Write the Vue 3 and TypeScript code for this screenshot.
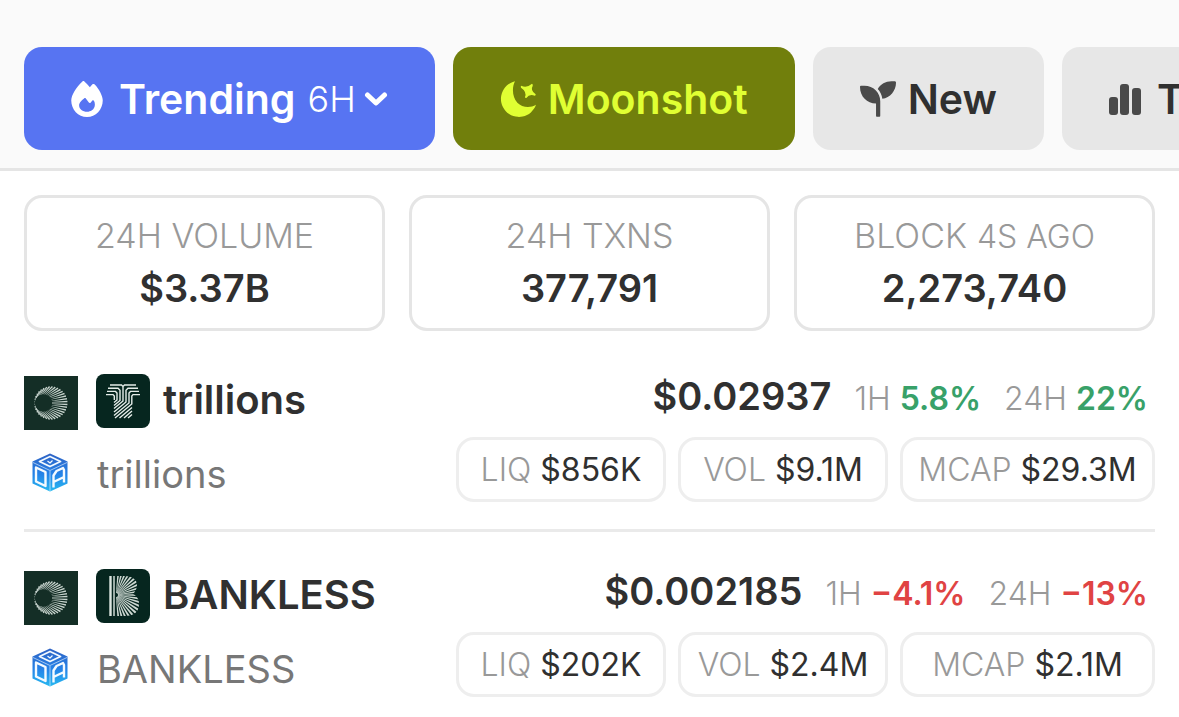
<script setup lang="ts">
interface Stat {
  label: string
  detail?: string
  value: string
}

interface Change {
  period: string
  value: string
  up: boolean
}

interface Token {
  name: string
  symbol: string
  logo: 'pillar' | 'fan'
  price: string
  changes: Change[]
  metrics: { label: string; value: string }[]
}

const stats: Stat[] = [
  { label: '24H VOLUME', value: '$3.37B' },
  { label: '24H TXNS', value: '377,791' },
  { label: 'BLOCK', detail: '4S AGO', value: '2,273,740' },
]

const tokens: Token[] = [
  {
    name: 'trillions',
    symbol: 'trillions',
    logo: 'pillar',
    price: '$0.02937',
    changes: [
      { period: '1H', value: '5.8%', up: true },
      { period: '24H', value: '22%', up: true },
    ],
    metrics: [
      { label: 'LIQ', value: '$856K' },
      { label: 'VOL', value: '$9.1M' },
      { label: 'MCAP', value: '$29.3M' },
    ],
  },
  {
    name: 'BANKLESS',
    symbol: 'BANKLESS',
    logo: 'fan',
    price: '$0.002185',
    changes: [
      { period: '1H', value: '−4.1%', up: false },
      { period: '24H', value: '−13%', up: false },
    ],
    metrics: [
      { label: 'LIQ', value: '$202K' },
      { label: 'VOL', value: '$2.4M' },
      { label: 'MCAP', value: '$2.1M' },
    ],
  },
]

// A spoke that widens from its inner point (x1, y1) to its outer point (x2, y2).
function wedge(x1: number, y1: number, x2: number, y2: number, inner: number, outer: number): string {
  const length = Math.hypot(x2 - x1, y2 - y1)
  const nx = -(y2 - y1) / length / 2
  const ny = (x2 - x1) / length / 2
  const corners = [
    [x1 + nx * inner, y1 + ny * inner],
    [x2 + nx * outer, y2 + ny * outer],
    [x2 - nx * outer, y2 - ny * outer],
    [x1 - nx * inner, y1 - ny * inner],
  ]
  return 'M' + corners.map(([x, y]) => `${x.toFixed(2)} ${y.toFixed(2)}`).join('L') + 'Z'
}

const ringPath = Array.from({ length: 36 }, (_, i) => {
  const a = ((i + 0.5) / 36) * Math.PI * 2
  const c = Math.cos(a)
  const s = Math.sin(a)
  return wedge(19.5 + 8.5 * c, 27 + 8.5 * s, 27 + 16.5 * c, 27 + 16.5 * s, 0.3, 1.5)
}).join('')

const fanPath = Array.from({ length: 21 }, (_, i) => {
  const a = ((-84 + i * (168 / 20)) * Math.PI) / 180
  const c = Math.cos(a)
  const s = Math.sin(a)
  return wedge(20 + 2 * c, 26 + 2 * s, 20 + 32 * c, 26 + 32 * s, 0.3, 2.6)
}).join('')
</script>

<template>
  <div class="page">
    <header class="topbar">
      <nav class="tabs" aria-label="Token lists">
        <button type="button" class="tab tab-trending">
          <svg class="icon narrow" viewBox="0 0 448 512" aria-hidden="true">
            <path fill="currentColor" d="M159.3 5.4c7.8-7.3 19.9-7.2 27.7 .1c27.6 25.9 53.5 53.8 77.7 84c11-14.4 23.5-30.1 37-42.9c7.9-7.4 20.1-7.4 28 .1c34.6 33 63.9 76.6 84.5 118c20.3 40.8 33.8 82.5 33.8 111.9C448 404.2 348.2 512 224 512C98.4 512 0 404.1 0 276.5c0-38.4 17.8-85.3 45.4-131.7C73.3 97.7 112.7 48.6 159.3 5.4zM225.7 436c25.3 0 47.7-7 68.8-21c42.1-29.4 53.4-88.2 28.1-134.4c-4.5-9-16-9.6-22.5-2l-25.2 29.3c-6.6 7.6-18.5 7.4-24.7-.5c-16.5-21-26-38.5-42.8-59.8c-6.3-8-18.3-8.1-24.7-.1c-53.8 42.5-70.8 69.3-70.8 99.4C112 395.4 162.6 436 225.7 436z" />
          </svg>
          <span>Trending</span>
          <span class="period">6H</span>
          <svg class="chevron" viewBox="0 0 24 16" aria-hidden="true">
            <path d="M3.5 4 12 12 20.5 4" fill="none" stroke="currentColor" stroke-width="5" stroke-linecap="round" stroke-linejoin="round" />
          </svg>
        </button>
        <button type="button" class="tab tab-moonshot">
          <svg class="icon" viewBox="0 0 108 108" aria-hidden="true">
            <path fill="currentColor" d="M45 1A54 54 0 1 0 108 71C90 82 66 79 52 65C37 49 35 20 45 1Z" />
            <path fill="currentColor" d="M64 14Q80 22 96 8Q100 11 98 15Q90 28 107 40Q108 44 104 44Q88 38 79 51Q75 52 75 48Q81 32 63 20Q61 16 64 14Z" />
          </svg>
          <span>Moonshot</span>
        </button>
        <button type="button" class="tab">
          <svg class="icon" viewBox="0 0 512 512" aria-hidden="true">
            <path fill="currentColor" d="M512 24c0 113.6-84.6 215.5-194.2 230c-7.1-53.4-30.6-101.6-65.3-139.3C290.8 46.3 364 4 448 4h44c12 0 20 8 20 20zM0 84C0 72 8 68 20 68H64c123.7 0 224 96.3 224 220v206c0 8-6 14-14 14h-32c-8 0-14-6-14-14V320C100.3 320 0 219.7 0 84z" />
          </svg>
          <span>New</span>
        </button>
        <button type="button" class="tab">
          <svg class="icon narrow" viewBox="0 0 32 36" aria-hidden="true">
            <g fill="currentColor">
              <rect x="0" y="16" width="9" height="18" rx="3" />
              <rect x="11" y="3" width="9" height="31" rx="3" />
              <rect x="23" y="7" width="9" height="27" rx="3" />
            </g>
          </svg>
          <span>Top</span>
        </button>
      </nav>
    </header>

    <main class="content">
      <dl class="stats">
        <div v-for="stat in stats" :key="stat.label" class="stat">
          <dt>{{ stat.label }}<span v-if="stat.detail" class="detail">{{ stat.detail }}</span></dt>
          <dd>{{ stat.value }}</dd>
        </div>
      </dl>

      <ul class="tokens">
        <li v-for="token in tokens" :key="token.name">
          <a href="#" class="token">
            <span class="identity">
              <span class="title">
                <svg class="chain" viewBox="0 0 54 54" aria-hidden="true">
                  <rect width="54" height="54" fill="#142e26" />
                  <path :d="ringPath" fill="#c8d4ce" />
                  <circle cx="19.5" cy="27" r="8.5" fill="#142e26" />
                </svg>
                <svg v-if="token.logo === 'pillar'" class="logo" viewBox="0 0 54 54" aria-hidden="true">
                  <rect width="54" height="54" fill="#06261f" />
                  <g fill="none" stroke="#e4ece8" stroke-width="1.4">
                    <path d="M14 11H25.5L27 12.5L28.5 11H40M27 12.5V27L18 34.5" />
                    <path d="M12 14.2H22L24 16.2V26.5L18 31.5" />
                    <path d="M42 14.2H32L30 16.2V28L18 38" />
                    <path d="M11 17.4H19.5L21 19V26L18 28.5" />
                    <path d="M43 17.4H34.5L33 19V29L18 41.5" />
                    <path d="M10 20.6H17L18.3 22V26" />
                    <path d="M44 20.6H37L35.8 22V30L19 44" />
                    <path d="M36 33.5L23.5 44M36 37L28 44M36 40.5L32 44" />
                  </g>
                </svg>
                <svg v-else class="logo" viewBox="0 0 54 54" aria-hidden="true">
                  <defs>
                    <clipPath id="fan-outline">
                      <path d="M19 7H28C37 7 41 11 41 16C41 20 39 23 37 25C41 27 43 30 43 35C43 43 38 47 29 47H19Z" />
                    </clipPath>
                  </defs>
                  <rect width="54" height="54" fill="#06261f" />
                  <path d="M14.5 7V47" stroke="#dce6e0" stroke-width="2.4" />
                  <path d="M18 7V47" stroke="#dce6e0" stroke-width="1.4" />
                  <path clip-path="url(#fan-outline)" :d="fanPath" fill="#ccd7d1" />
                </svg>
                <span class="name">{{ token.name }}</span>
              </span>
              <span class="subtitle">
                <svg class="dex" viewBox="0 0 36 38" aria-hidden="true">
                  <defs>
                    <linearGradient :id="'cube-' + token.logo" x1="0" y1="0" x2="0" y2="1">
                      <stop offset="0" stop-color="#2e62c4" />
                      <stop offset="0.55" stop-color="#2583e8" />
                      <stop offset="1" stop-color="#27b9f0" />
                    </linearGradient>
                  </defs>
                  <path :fill="'url(#cube-' + token.logo + ')'" d="M18 0L35.5 8V30L18 38L0.5 30V8Z" />
                  <g fill="none" stroke="#f4faff" stroke-linejoin="round">
                    <path stroke-width="0.6" d="M18 17.5V37.5M1 9L18 17L35 9" />
                    <path stroke-width="2.4" d="M4 14L13.5 18.5V32.5L4 28Z" />
                    <path stroke-width="2.4" d="M21.5 34V22L24.5 17.5L31 14.5L32 16.5V29M21.5 28.5L32 23.5" />
                    <path stroke-width="1.8" d="M18 3L28.5 8L18 13L7.500 8Z" />
                    <path stroke-width="1.2" d="M15.5 7.5L18 9.5L20.5 7" />
                  </g>
                </svg>
                <span class="symbol">{{ token.symbol }}</span>
              </span>
            </span>
            <span class="market">
              <span class="quote">
                <strong class="price">{{ token.price }}</strong>
                <span v-for="change in token.changes" :key="change.period" class="change">
                  <span class="muted">{{ change.period }}</span>
                  <strong :class="change.up ? 'up' : 'down'">{{ change.value }}</strong>
                </span>
              </span>
              <span class="metrics">
                <span v-for="metric in token.metrics" :key="metric.label" class="metric">
                  <span class="muted">{{ metric.label }}</span>
                  <span>{{ metric.value }}</span>
                </span>
              </span>
            </span>
          </a>
        </li>
      </ul>
    </main>
  </div>
</template>

<style>
body {
  margin: 0;
  background: #fff;
}
</style>

<style scoped>
.page {
  font-family: Inter, "Noto Sans", sans-serif;
  color: #303030;
  overflow: hidden;
}

.topbar {
  background: #fafafa;
  border-bottom: 3px solid #e5e5e5;
}

.tabs {
  display: flex;
  gap: 18px;
  padding: 47px 0 18px 24px;
  overflow: hidden;
}

.tab {
  display: flex;
  flex: none;
  align-items: center;
  gap: 12px;
  height: 103px;
  padding: 0 47px;
  border: 0;
  border-radius: 18px;
  background: #e7e7e7;
  color: #303030;
  font: inherit;
  font-size: 41px;
  font-weight: 600;
}

.tab .icon {
  width: 36px;
  height: 36px;
  color: #4a4a4a;
}

.tab .narrow {
  width: 32px;
  margin-right: 4px;
}

.tab-trending {
  background: #5774f2;
  color: #fff;
}

.tab-moonshot {
  background: #717f0c;
  color: #e0ff33;
}

.tab-trending .icon,
.tab-moonshot .icon {
  color: inherit;
}

.period {
  font-size: 36px;
  font-weight: 300;
}

.chevron {
  width: 24px;
  height: 16px;
  margin-left: -4px;
}

.content {
  padding: 24px 24px 0;
}

.stats {
  display: grid;
  grid-template-columns: repeat(3, 1fr);
  gap: 24px;
  margin: 0 0 6px;
}

.stat {
  padding: 12px 0 13px;
  border: 3px solid #e5e5e5;
  border-radius: 18px;
  text-align: center;
  white-space: nowrap;
}

.stat dt {
  color: #999;
  font-size: 34px;
  font-weight: 300;
  line-height: 52px;
}

.detail {
  margin-left: 10px;
  font-size: 32px;
  line-height: 1;
}

.stat dd {
  margin: 0;
  font-size: 38px;
  font-weight: 600;
  line-height: 53px;
}

.tokens {
  margin: 0;
  padding: 0;
  list-style: none;
}

.token {
  display: flex;
  justify-content: space-between;
  padding: 30px 0 27px;
  border-bottom: 3px solid #eaeaea;
  color: inherit;
  text-decoration: none;
  white-space: nowrap;
}

li:last-child .token {
  padding-bottom: 16px;
  border-bottom: 0;
}

.identity {
  display: flex;
  flex-direction: column;
  padding-top: 7px;
}

.title {
  display: flex;
  align-items: flex-start;
  height: 56px;
}

.chain {
  width: 54px;
  height: 54px;
  margin: 2px 18px 0 0;
}

.logo {
  width: 54px;
  height: 54px;
  margin-right: 13px;
  border-radius: 8px;
}

.name {
  font-size: 40px;
  font-weight: 600;
  line-height: 52px;
}

.subtitle {
  display: flex;
  align-items: center;
  gap: 29px;
  height: 60px;
  padding: 12px 0 0 8px;
}

.dex {
  width: 36px;
  height: 39px;
}

.symbol {
  padding-top: 4px;
  color: #777;
  font-size: 38px;
  font-weight: 400;
}

.market {
  display: flex;
  flex-direction: column;
  align-items: flex-end;
}

.quote {
  display: flex;
  align-items: baseline;
  gap: 23px;
  height: 70px;
  padding-right: 7px;
  line-height: 58px;
}

.price {
  font-size: 38px;
  font-weight: 600;
}

.change {
  display: flex;
  align-items: baseline;
  gap: 9px;
  font-size: 32px;
}

.change strong {
  font-size: 32px;
  font-weight: 600;
}

.up {
  color: #38a169;
}

.down {
  color: #e04343;
}

.muted {
  color: #999;
  font-weight: 300;
}

.metrics {
  display: grid;
  grid-template-columns: 210px 210px 255px;
  gap: 12px;
}

.metric {
  display: flex;
  justify-content: center;
  align-items: center;
  gap: 9px;
  height: 59px;
  border: 3px solid #eee;
  border-radius: 18px;
  font-size: 32px;
}
</style>
